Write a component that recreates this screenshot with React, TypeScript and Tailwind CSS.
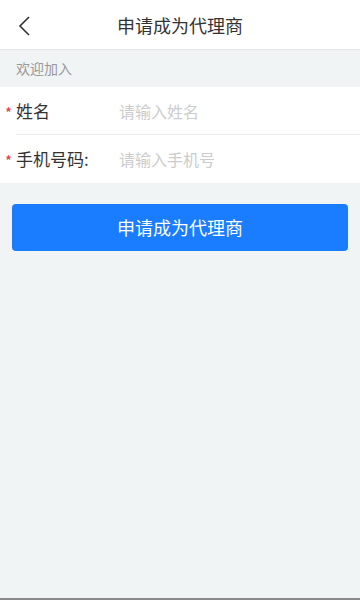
import { useState } from 'react'

const font = { fontFamily: '"Noto Sans CJK SC", "Noto Sans", sans-serif' }

export default function App() {
  const [name, setName] = useState('')
  const [phone, setPhone] = useState('')

  return (
    <div className="h-[600px] w-[360px] flex flex-col bg-[#f0f4f5] border-b-2 border-[#8a8a8a]" style={font}>
      {/* 顶部导航 */}
      <div className="h-[50px] shrink-0 relative flex items-center justify-center bg-white border-b border-[#e3e7e9]">
        <button className="absolute left-[14px] top-[14px] w-[20px] h-[24px] flex items-center justify-center">
          <svg width="14" height="22" viewBox="0 0 14 22" fill="none">
            <path d="M12 2 L3 11 L12 20" stroke="#333" strokeWidth="1.6" strokeLinejoin="miter" />
          </svg>
        </button>
        <span className="text-[18px] text-[#333] leading-none">申请成为代理商</span>
      </div>

      <div className="h-[37px] shrink-0 flex items-center pl-4 text-[14px] text-[#999]">欢迎加入</div>

      {/* 表单 */}
      <div className="bg-white">
        <div className="h-[48px] flex items-center border-b border-[#ebebeb] ml-4">
          <label className="relative w-[103px] text-[17px] text-[#333]">
            <span className="absolute -left-[11px] top-[4px] text-[15px] text-[#f0323c]">*</span>
            姓名
          </label>
          <input
            value={name}
            onChange={(e) => setName(e.target.value)}
            placeholder="请输入姓名"
            className="flex-1 text-[16px] outline-none placeholder:text-[#cccccc] bg-transparent"
          />
        </div>
        <div className="h-[48px] flex items-center ml-4">
          <label className="relative w-[103px] text-[17px] text-[#333]">
            <span className="absolute -left-[11px] top-[4px] text-[15px] text-[#f0323c]">*</span>
            手机号码:
          </label>
          <input
            value={phone}
            onChange={(e) => setPhone(e.target.value)}
            placeholder="请输入手机号"
            className="flex-1 text-[16px] outline-none placeholder:text-[#cccccc] bg-transparent"
          />
        </div>
      </div>

      <div className="px-3 pt-[21px]">
        <button className="w-full h-[47px] rounded bg-[#1a7cff] text-white text-[18px]">申请成为代理商</button>
      </div>
    </div>
  )
}
